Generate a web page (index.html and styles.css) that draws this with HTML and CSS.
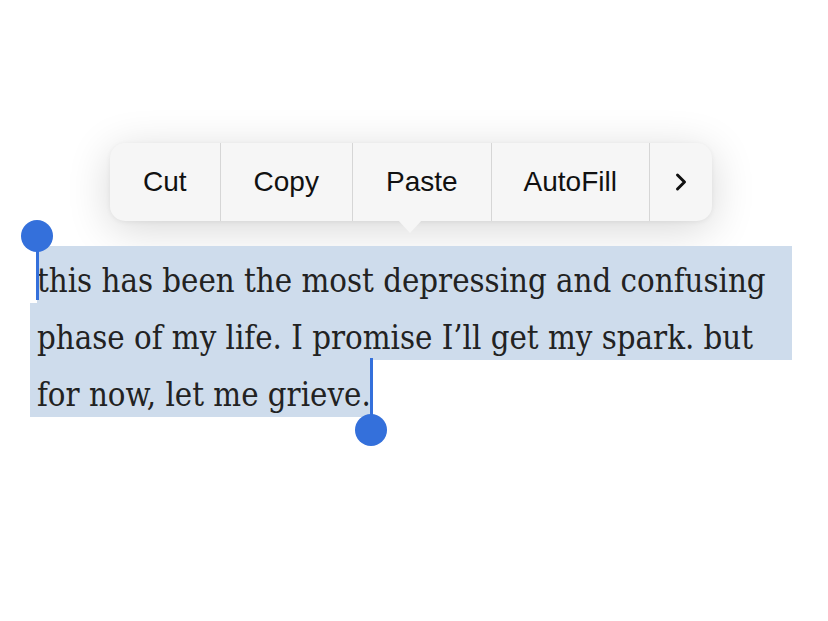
FILE: index.html
```html
<!DOCTYPE html>
<html>
<head>
<meta charset="utf-8">
<link rel="stylesheet" href="styles.css">
</head>
<body>
<div class="page">
  <div class="menu-wrap">
    <div class="menu">
      <div class="item">Cut</div>
      <div class="item">Copy</div>
      <div class="item">Paste</div>
      <div class="item autofill">AutoFill</div>
      <div class="item more"><svg width="14" height="20" viewBox="0 0 14 20"><path d="M3.5 3 L10.5 10 L3.5 17" fill="none" stroke="#111" stroke-width="3" stroke-linecap="round" stroke-linejoin="round"/></svg></div>
    </div>
    <div class="tail"></div>
  </div>
  <div class="selection">
    <div class="row first"><span>this has been the most depressing and confusing</span></div>
    <div class="row full"><span>phase of my life. I promise I’ll get my spark. but</span></div>
    <div class="row last"><span>for now, let me grieve.</span></div>
    <div class="handle start"><div class="knob"></div><div class="bar"></div></div>
    <div class="handle end"><div class="bar"></div><div class="knob"></div></div>
  </div>
</div>
</body>
</html>
```
FILE: styles.css
```css
html, body {
  margin: 0;
  padding: 0;
  background: #ffffff;
}
.page {
  width: 828px;
  height: 621px;
  overflow: hidden;
  padding-top: 143px;
  box-sizing: border-box;
}
.menu-wrap {
  position: relative;
  margin-left: 110px;
  width: 602px;
}
.menu {
  display: flex;
  height: 78px;
  background: #f6f6f6;
  border-radius: 15px;
  box-shadow: 0 8px 44px rgba(0,0,0,0.16), 0 1px 5px rgba(0,0,0,0.06);
  font-family: "Liberation Sans", Arial, sans-serif;
  font-size: 28px;
  color: #111;
}
.item {
  display: flex;
  align-items: center;
  justify-content: center;
  padding: 0 33px;
  border-right: 1px solid #d6d6d6;
}
.item.autofill {
  padding: 0 32px;
}
.item.more {
  border-right: none;
  padding: 0;
  flex: 1;
}
.tail {
  position: absolute;
  left: 287px;
  top: 76px;
  width: 26px;
  height: 14px;
  background: #f6f6f6;
  clip-path: polygon(0 0, 100% 0, 50% 100%);
}
.selection {
  position: relative;
  margin-top: 25px;
  margin-left: 30px;
  width: 762px;
  font-family: "DejaVu Serif Condensed", "DejaVu Serif", serif;
  font-stretch: condensed;
  font-size: 32.65px;
  color: #222;
}
.row {
  height: 57px;
  white-space: nowrap;
}
.row span {
  display: block;
  box-sizing: border-box;
  background: #cedcec;
  height: 57px;
  line-height: 57px;
  padding-top: 7px;
}
.row.first span {
  margin-left: 7px;
}
.row.full span {
  padding-left: 7px;
}
.row.last span {
  display: inline-block;
  padding-left: 7px;
  width: 342px;
}
.handle {
  position: absolute;
  display: flex;
  flex-direction: column;
  align-items: center;
  width: 32px;
}
.knob {
  width: 32px;
  height: 32px;
  border-radius: 50%;
  background: #3470db;
}
.bar {
  width: 3px;
  background: #3470db;
}
.handle.start {
  left: -9px;
  top: -26px;
}
.handle.start .bar {
  height: 54px;
  margin-top: -6px;
}
.handle.end {
  left: 325px;
  top: 112px;
}
.handle.end .bar {
  height: 62px;
  margin-bottom: -6px;
}
```
